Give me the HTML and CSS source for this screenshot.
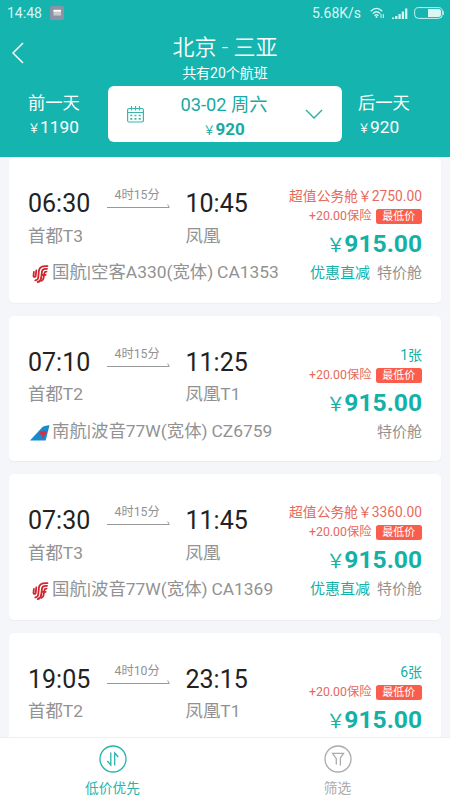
FILE: index.html
```html
<!DOCTYPE html>
<html lang="zh-CN">
<head>
<meta charset="utf-8">
<title>北京 - 三亚</title>
<link rel="stylesheet" href="styles.css">
</head>
<body>
<svg class="defs" width="0" height="0">
  <symbol id="arrow" viewBox="0 0 64 6"><path d="M0 4.500H62.200L60.700 1.500" fill="none" stroke="#999" stroke-width="1"/></symbol>
  <symbol id="airchina" viewBox="0 0 17 18">
    <g fill="none" stroke="#d0262f" stroke-width="1.800" stroke-linecap="round">
      <path d="M15.500 1.200C11 .8 7.600 2 7 5.200L6.300 12c-.2 2-1.200 3.300-3 3.400"/>
      <path d="M15 3.900c-3-.3-4.700.4-5 2.500L9.200 13c-.3 2-1.500 3.600-3.500 4"/>
      <path d="M14.500 6.600c-1.500 0-2 .4-2.200 1.700l-.7 4.500c-.2 1.500-.8 2.500-1.900 3"/>
      <path d="M4.300 5.500 3.700 11c-.1 1.400-2.400 1.200-2.200-.2L1.900 7M10.500 9.800h3.200"/>
    </g>
  </symbol>
  <symbol id="southern" viewBox="0 0 20 16">
    <path d="M0 15.500 12 2.500Q14 .5 19.500.3L15.600 15.500Z" fill="#168bce"/>
    <path d="M12.500 13.500 12 10 9.300 8.700l1-2.600 2.200.4 1.200-1.800 1 1.800 2-.2-.3 2.600-2.300 1.200-.4 3.400Z" fill="#e02c42"/>
  </symbol>
</svg>
<div class="screen">
  <header class="header">
    <div class="status">
      <span class="clock">14:48</span>
      <svg class="notice" viewBox="0 0 14 14"><rect width="14" height="14" rx="2" fill="#8d93a5"/><path d="M3.500 4h7.500v5.500H3.500Z" fill="#c9c9d2"/><path d="M3.500 4.700h7.500" stroke="#fff" stroke-width="1.800"/></svg>
      <span class="speed">5.68K/s</span>
      <svg class="wifi" viewBox="0 0 15 12"><g fill="none" stroke="#d5f7f4" stroke-width="1.300"><path d="M.7 4.200Q6.500-1.400 12.300 4.200M2.700 6.600Q6.500 3 10.300 6.600M4.600 8.700Q6.500 6.900 8.400 8.700"/><path d="M11 7v4M13.300 7v4" stroke-width="1"/></g><circle cx="6.500" cy="10" r="1" fill="#d5f7f4"/></svg>
      <svg class="signal" viewBox="0 0 16 11"><path d="M1 9.500V11M4.300 8v3M7.600 6v5M10.900 3.500V11M14.200.5V11" stroke="#d5f7f4" stroke-width="2.300"/></svg>
      <svg class="battery" viewBox="0 0 30 12"><rect x=".6" y=".6" width="27.800" height="10.800" rx="4" fill="none" stroke="#c8f3ef" stroke-width="1"/><path d="M14 2h10.500q2.500 0 2.500 2v4q0 2-2.500 2H14Z" fill="#d9f8f5"/><path d="M29.300 4v4" stroke="#c8f3ef"/></svg>
    </div>
    <div class="titlebar">
      <svg class="back" viewBox="0 0 12 22"><path d="M11 1 1 11 11 21" fill="none" stroke="#fff" stroke-width="1.500"/></svg>
      <div class="titles"><h1>北京 - 三亚</h1><p>共有20个航班</p></div>
    </div>
    <div class="dates">
      <div class="day"><span>前一天</span><span><i>&#xFFE5;</i>1190</span></div>
      <div class="picker">
        <svg class="calendar" viewBox="0 0 17 17"><g fill="none" stroke="#3bb5ad" stroke-width="1.200"><rect x=".6" y="2.500" width="15.800" height="13.500" rx="1.500"/><path d="M.6 6.500h15.800M4.500 0v4.500M8.500 0v4.500M12.500 0v4.500"/><path d="M3.300 9.500h2M7.500 9.500h2M11.700 9.500h2M3.300 12.800h2M7.500 12.800h2M11.700 12.800h2" stroke-width="1.700"/></g></svg>
        <div class="chosen"><span>03-02 周六</span><b><i>&#xFFE5;</i>920</b></div>
        <svg class="chevron" viewBox="0 0 18 10"><path d="M1 1 9 9 17 1" fill="none" stroke="#27aca4" stroke-width="1.300"/></svg>
      </div>
      <div class="day"><span>后一天</span><span><i>&#xFFE5;</i>920</span></div>
    </div>
  </header>
  <main class="list">
    <article class="card">
      <div class="flight">
        <div class="times"><time>06:30</time><div class="duration"><span>4时15分</span><svg><use href="#arrow"/></svg></div><time>10:45</time></div>
        <div class="airports"><span>首都T3</span><span>凤凰</span></div>
        <div class="airline"><svg class="ca"><use href="#airchina"/></svg><span>国航|空客A330(宽体) <em>CA1353</em></span></div>
      </div>
      <div class="fare">
        <div class="business">超值公务舱<i>&#xFFE5;</i>2750.00</div>
        <div class="insurance">+20.00保险<span class="badge">最低价</span></div>
        <div class="price"><i>&#xFFE5;</i>915.00</div>
        <div class="cabin"><strong>优惠直减</strong><span>特价舱</span></div>
      </div>
    </article>
    <article class="card">
      <div class="flight">
        <div class="times"><time>07:10</time><div class="duration"><span>4时15分</span><svg><use href="#arrow"/></svg></div><time>11:25</time></div>
        <div class="airports"><span>首都T2</span><span>凤凰T1</span></div>
        <div class="airline"><svg class="cz"><use href="#southern"/></svg><span>南航|波音77W(宽体) <em>CZ6759</em></span></div>
      </div>
      <div class="fare few">
        <div class="seats">1张</div>
        <div class="insurance">+20.00保险<span class="badge">最低价</span></div>
        <div class="price"><i>&#xFFE5;</i>915.00</div>
        <div class="cabin"><span>特价舱</span></div>
      </div>
    </article>
    <article class="card">
      <div class="flight">
        <div class="times"><time>07:30</time><div class="duration"><span>4时15分</span><svg><use href="#arrow"/></svg></div><time>11:45</time></div>
        <div class="airports"><span>首都T3</span><span>凤凰</span></div>
        <div class="airline"><svg class="ca"><use href="#airchina"/></svg><span>国航|波音77W(宽体) <em>CA1369</em></span></div>
      </div>
      <div class="fare">
        <div class="business">超值公务舱<i>&#xFFE5;</i>3360.00</div>
        <div class="insurance">+20.00保险<span class="badge">最低价</span></div>
        <div class="price"><i>&#xFFE5;</i>915.00</div>
        <div class="cabin"><strong>优惠直减</strong><span>特价舱</span></div>
      </div>
    </article>
    <article class="card">
      <div class="flight">
        <div class="times"><time>19:05</time><div class="duration"><span>4时10分</span><svg><use href="#arrow"/></svg></div><time>23:15</time></div>
        <div class="airports"><span>首都T2</span><span>凤凰T1</span></div>
      </div>
      <div class="fare few">
        <div class="seats">6张</div>
        <div class="insurance">+20.00保险<span class="badge">最低价</span></div>
        <div class="price"><i>&#xFFE5;</i>915.00</div>
      </div>
    </article>
  </main>
  <nav class="tabs">
    <div class="tab active"><svg viewBox="0 0 28 28"><g fill="none" stroke="currentColor" stroke-width="1.300"><circle cx="14" cy="14" r="13"/><path d="M11.800 7.500V20L8.300 16M15.700 20.500V8L19.300 12"/></g></svg><span>低价优先</span></div>
    <div class="tab"><svg viewBox="0 0 28 28"><g fill="none" stroke="currentColor" stroke-width="1.300"><circle cx="14" cy="14" r="13"/><path d="M12.300 19.500V13.700L8.600 8.300H19.500L16.400 13V20.500"/></g></svg><span>筛选</span></div>
  </nav>
</div>
</body>
</html>
```
FILE: styles.css
```css
* { box-sizing: border-box; }
body { margin: 0; font-family: Roboto, "Noto Sans CJK SC", sans-serif; }
h1, p { margin: 0; font-weight: 400; }
i, em { font-style: normal; }
i { font-family: "Noto Sans CJK SC", sans-serif; }
svg { display: block; flex: none; }
.defs { position: absolute; }
.screen { width: 450px; height: 800px; display: flex; flex-direction: column; overflow: hidden; background: #f4f6f9; white-space: nowrap; }

.header { flex: none; height: 157px; background: #15b4ae; color: #fff; }
.status { display: flex; align-items: center; height: 26px; padding: 0 6px 0 7px; color: #d5f7f4; font-size: 14px; line-height: 26px; }
.clock { width: 43px; }
.notice { width: 14px; height: 14px; }
.speed { margin-left: auto; width: 49px; margin-right: 9px; }
.wifi { width: 15px; height: 12px; margin-right: 7px; }
.signal { width: 16px; height: 11px; margin-right: 6px; }
.battery { width: 30px; height: 12px; }
.titlebar { display: flex; align-items: flex-start; height: 60px; padding: 0 12px; }
.back { width: 12px; height: 22px; margin-top: 16px; }
.titles { flex: 1; padding: 8px 12px 0 0; text-align: center; }
.titles h1 { font-size: 22px; line-height: 28px; font-weight: 350; }
.titles p { font-size: 14px; line-height: 22px; }
.dates { display: grid; grid-template-columns: 108px 234px 108px; }
.day { padding: 5px 0 0 28px; font-size: 17.300px; line-height: 24px; display: flex; flex-direction: column; }
.day:last-child { padding-left: 16px; }
.day i, .chosen i { font-size: 12px; }
.picker { display: flex; align-items: center; height: 56px; padding: 0 19px; background: #fff; border-radius: 6px; color: #18aaa3; }
.calendar { width: 17px; height: 17px; }
.chosen { flex: 1; display: flex; flex-direction: column; align-items: center; padding: 6px 1px 0 0; font-size: 18.300px; line-height: 25px; }
.chosen b { font-size: 17px; line-height: 24px; }
.chosen i { font-weight: 400; }
.chevron { width: 18px; height: 10px; }

.list { flex: 1; min-height: 0; overflow: hidden; padding: 0.500px 9px 0; display: flex; flex-direction: column; gap: 13.200px; }
.card { flex: none; height: 145.300px; display: flex; justify-content: space-between; padding: 0 19px; background: #fff; border-radius: 5px; box-shadow: 0 1px 1px #eceef1; }
.flight { padding-top: 30.800px; color: #929292; font-size: 17.400px; line-height: 24px; }
.times { display: flex; height: 30px; }
.times time { color: #222; font-size: 25px; line-height: 31px; }
.times time:first-child { width: 78.500px; }
.duration { width: 79px; font-size: 12.300px; line-height: 14px; }
.duration span { display: block; padding-left: 8px; }
.duration svg { width: 64px; height: 6px; margin-top: 1px; }
.airports { display: grid; grid-template-columns: 157.500px auto; padding-top: 5.500px; }
.airline { display: flex; align-items: center; height: 24px; margin-top: 12.500px; }
.ca { width: 17px; height: 18px; margin: 4px 3px 0 4px; }
.cz { width: 20px; height: 16px; margin: 4px 2px 0 2px; }
.airline em { margin-left: -0.500px; }
.fare { display: flex; flex-direction: column; align-items: flex-end; padding-top: 27px; color: #15b0a8; }
.few { padding-top: 29px; }
.business { color: #e66a5c; font-size: 13.800px; line-height: 20px; }
.seats { font-size: 14px; line-height: 20px; }
.insurance { display: flex; align-items: center; height: 21px; color: #e66a5c; font-size: 12.300px; line-height: 21px; }
.badge { width: 46.500px; height: 15px; margin-left: 4px; border-radius: 2.500px; background: #fb5d4c; color: #fff; font-size: 11px; line-height: 15px; text-align: center; }
.price { display: flex; padding-top: 1px; font-size: 24.600px; line-height: 32px; font-weight: 700; }
.price i { font-size: 19px; line-height: 31px; font-weight: 400; margin-right: -1px; }
.cabin { display: flex; gap: 7px; height: 27px; font-size: 15px; line-height: 27px; }
.cabin strong { font-weight: 400; }
.cabin span { color: #929292; }

.tabs { flex: none; height: 63px; display: grid; grid-template-columns: 1fr 1fr; background: #fff; border-top: 1px solid #eceef1; }
.tab { display: flex; flex-direction: column; align-items: center; padding-top: 7px; color: #aaa; font-size: 13.700px; line-height: 20px; }
.tab svg { width: 28px; height: 28px; margin-bottom: 5px; }
.active { color: #27b3aa; }
```
